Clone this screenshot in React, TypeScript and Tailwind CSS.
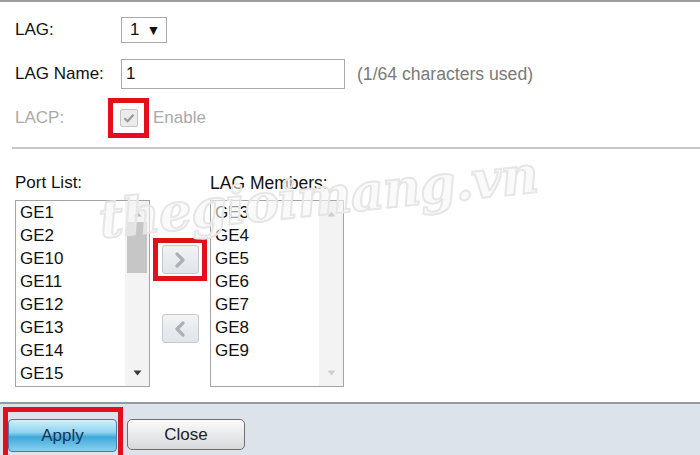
const portList = ["GE1", "GE2", "GE10", "GE11", "GE12", "GE13", "GE14", "GE15"];
const members = ["GE3", "GE4", "GE5", "GE6", "GE7", "GE8", "GE9"];

function Arrow({ dir, color }: { dir: "up" | "down"; color: string }) {
  return (
    <svg width="9" height="6" viewBox="0 0 9 6" aria-hidden="true">
      {dir === "up" ? <path d="M0.5 5.5 4.5 0.5 8.5 5.5Z" fill={color} /> : <path d="M0.5 0.5 4.5 5.5 8.5 0.5Z" fill={color} />}
    </svg>
  );
}

function ListBox({ items, thumb }: { items: string[]; thumb: boolean }) {
  return (
    <div className="flex h-[187px] w-full overflow-hidden border border-[#a3a3a3] bg-white">
      <div className="flex-1 overflow-hidden pl-[4px]">
        {items.map((it) => (
          <div key={it} className="h-[23px] leading-[23px] text-[17px] text-[#111]">
            {it}
          </div>
        ))}
      </div>
      <div className="flex w-[24px] flex-col items-center bg-[#f3f3f3] py-[10px]">
        <Arrow dir="up" color={thumb ? "#b9b9b9" : "#cfcfcf"} />
        <div className="mt-[5px] flex-1 self-stretch px-[2px]">
          {thumb && <div className="h-[51px] bg-[#c6c6c6]" />}
        </div>
        <Arrow dir="down" color={thumb ? "#3a3a3a" : "#cfcfcf"} />
      </div>
    </div>
  );
}

function MoveButton({ left }: { left?: boolean }) {
  return (
    <div className="flex h-[29px] w-[37px] items-center justify-center rounded-[3px] border border-[#c3c9cf] bg-[linear-gradient(#f1f3f5,#e1e5e9)]">
      <svg width="14" height="16" viewBox="0 0 14 16" aria-hidden="true">
        <path
          d={left ? "M10 2 4 8l6 6" : "M4 2l6 6-6 6"}
          fill="none"
          stroke="#a9b2bb"
          strokeWidth="3.2"
          strokeLinecap="round"
          strokeLinejoin="round"
        />
      </svg>
    </div>
  );
}

export default function App() {
  return (
    <div className="relative h-[455px] w-[700px] overflow-hidden bg-white font-['Liberation_Sans',Arial,sans-serif] text-[17px] text-[#111]">
      <div className="h-[2px] bg-[#9d9d9d]" />

      {/* form rows */}
      <div className="pl-[15px]">
        <div className="mt-[15px] flex h-[26px] items-center">
          <span className="w-[106px]">LAG:</span>
          <div className="flex h-[26px] w-[46px] items-center gap-[7px] border border-[#aaaaaa] pl-[8px]">
            <span>1</span>
            <span className="text-[14px]">▼</span>
          </div>
        </div>

        <div className="mt-[16px] flex h-[30px] items-center">
          <span className="w-[106px]">LAG Name:</span>
          <div className="flex h-[30px] w-[224px] items-center border border-[#aaaaaa] pl-[4px]">1</div>
          <span className="ml-[12px] text-[17.6px] text-[#7a7a7a]">(1/64 characters used)</span>
        </div>

        <div className="mt-[9px] flex h-[40px] items-center text-[#a9a9a9]">
          <span className="w-[93px]">LACP:</span>
          <div className="flex h-[40px] w-[41px] items-center justify-center border-[5px] border-[#e3101c] bg-white">
            <div className="flex h-[18px] w-[18px] items-center justify-center rounded-[2px] border border-[#c4c4c4] bg-[#ececec]">
              <svg width="12" height="10" viewBox="0 0 12 10" aria-hidden="true">
                <path d="M1.5 5.2 4.6 8.2 10.5 1.8" fill="none" stroke="#9a9a9a" strokeWidth="2.2" />
              </svg>
            </div>
          </div>
          <span className="ml-[4px]">Enable</span>
        </div>
      </div>

      <div className="ml-[12px] mt-[9px] h-[2px] bg-[#c6c6c6]" />

      {/* port lists */}
      <div className="mt-[24px] flex pl-[15px]">
        <div className="w-[135px]">
          <div className="mb-[7px] h-[20px] leading-[20px]">Port List:</div>
          <ListBox items={portList} thumb />
        </div>
        <div className="flex w-[60px] flex-col items-center pt-[65px]">
          <div className="flex h-[43px] w-[54px] items-center justify-center border-[5px] border-[#e3101c] bg-white">
            <MoveButton />
          </div>
          <div className="mt-[33px]">
            <MoveButton left />
          </div>
        </div>
        <div className="w-[134px]">
          <div className="mb-[7px] h-[20px] text-[17.5px] leading-[20px]">LAG Members:</div>
          <ListBox items={members} thumb={false} />
        </div>
      </div>

      {/* footer */}
      <div className="mt-[15px] h-[2px] bg-[#959a9f]" />
      <div className="flex h-[60px] items-start bg-[#dce3ea] pl-[3px] pt-[3px]">
        <div className="h-[60px] w-[120px] border-[5px] border-b-0 border-[#e3101c] pt-[7px]">
          <div className="flex h-[33px] w-[109px] items-center justify-center rounded-[4px] border border-[#3f7fa8] bg-[linear-gradient(#d3effb_0%,#8fd3f0_40%,#3ea9dc_55%,#8ad0ef_100%)] text-[#1b3553]">
            Apply
          </div>
        </div>
        <div className="ml-[4px] mt-[12px] flex h-[31px] w-[118px] items-center justify-center rounded-[5px] border border-[#707070] bg-[linear-gradient(#fbfbfb,#d6d9dc)] text-[#222]">
          Close
        </div>
      </div>

      {/* watermark */}
      <div className="pointer-events-none absolute left-[98px] top-[158px] -rotate-[6deg] font-['DejaVu_Serif',serif] text-[52px] font-bold italic tracking-[-1px] text-[#f7f7f7]/60 [-webkit-text-stroke:2px_#e6e6e6]">
        thegioimang.vn
      </div>
    </div>
  );
}
